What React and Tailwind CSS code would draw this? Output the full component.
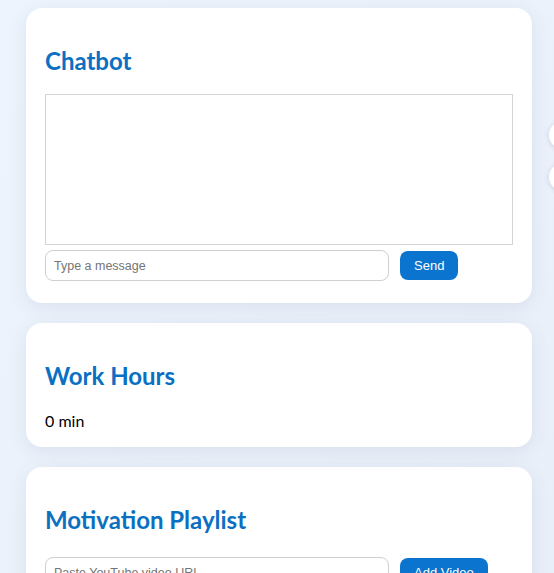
import React from "react";

const heading = "text-[24px] leading-[32px] font-bold text-[#0b70c2] [font-family:Lato,sans-serif]";
const field =
  "h-[31px] border border-[#cfcfcf] rounded-lg px-[8px] text-[12.5px] text-gray-800 placeholder-[#757575] bg-white outline-none [font-family:'Liberation_Sans',Arial,sans-serif]";
const btn =
  "h-[29px] px-[14px] rounded-lg bg-[#0a74cf] text-white text-[13px] [font-family:'Liberation_Sans',Arial,sans-serif]";

const Card = ({ title, children, pb = "pb-[22px]" }) => (
  <section className={"w-[506px] bg-white rounded-2xl shadow-[0_4px_18px_rgba(60,90,140,0.10)] px-[19px] pt-[37px] " + pb}>
    <h2 className={heading}>{title}</h2>
    {children}
  </section>
);

export default function App() {
  return (
    <div className="relative h-[573px] overflow-hidden bg-gradient-to-br from-[#edf4fd] to-[#e9eff8] pl-[26px] pt-[8px] flex flex-col gap-[20px]">
      <Card title="Chatbot">
        <div className="mt-[17px] h-[151px] border border-[#d4d4d4] bg-white" />
        <div className="mt-[5px] flex items-center gap-[11px]">
          <input className={field + " w-[344px]"} placeholder="Type a message" />
          <button className={btn}>Send</button>
        </div>
      </Card>

      <Card title="Work Hours" pb="pb-[14px]">
        <p className="mt-[17px] text-[16px] leading-[24px] text-black [font-family:Lato,sans-serif]">0 min</p>
      </Card>

      <Card title="Motivation Playlist">
        <div className="mt-[21px] flex items-center gap-[11px]">
          <input className={field + " w-[344px]"} placeholder="Paste YouTube video URL" />
          <button className={btn + " px-[13px]"}>Add Video</button>
        </div>
        <div className="h-[40px]" />
      </Card>

      <div className="absolute left-[549px] top-[121px] w-[28px] h-[28px] rounded-full bg-white shadow-[0_1px_5px_rgba(40,60,100,0.18)]" />
      <div className="absolute left-[549px] top-[163px] w-[28px] h-[28px] rounded-full bg-white shadow-[0_1px_5px_rgba(40,60,100,0.18)]" />
    </div>
  );
}
